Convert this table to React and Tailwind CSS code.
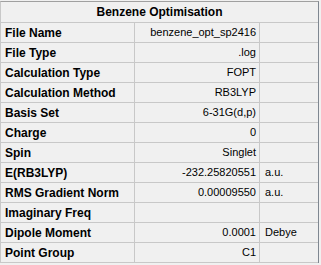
// Benzene Optimisation — tabela de resultados

const LINHAS = [
  { rotulo: 'File Name', valor: 'benzene_opt_sp2416', unidade: '' },
  { rotulo: 'File Type', valor: '.log', unidade: '' },
  { rotulo: 'Calculation Type', valor: 'FOPT', unidade: '' },
  { rotulo: 'Calculation Method', valor: 'RB3LYP', unidade: '' },
  { rotulo: 'Basis Set', valor: '6-31G(d,p)', unidade: '' },
  { rotulo: 'Charge', valor: '0', unidade: '' },
  { rotulo: 'Spin', valor: 'Singlet', unidade: '' },
  { rotulo: 'E(RB3LYP)', valor: '-232.25820551', unidade: 'a.u.' },
  { rotulo: 'RMS Gradient Norm', valor: '0.00009550', unidade: 'a.u.' },
  { rotulo: 'Imaginary Freq', valor: '', unidade: '' },
  { rotulo: 'Dipole Moment', valor: '0.0001', unidade: 'Debye' },
  { rotulo: 'Point Group', valor: 'C1', unidade: '' },
];

export default function App() {
  return (
    <div
      className="w-[321px] h-[265px] bg-[#f0f0f0] overflow-hidden pt-px text-[12px] text-black"
      style={{ fontFamily: '"Liberation Sans", Arial, sans-serif' }}
    >
      <div className="w-[319px] border-t border-l border-r border-t-[#a0a0a0] border-l-[#c8c8c8] border-r-[#7f8791]">
        {/* Título */}
        <div className="h-[21px] border-b border-[#c8c8c8] flex items-center justify-center font-bold">
          Benzene Optimisation
        </div>

        {/* Linhas de dados */}
        {LINHAS.map(({ rotulo, valor, unidade }) => (
          <div key={rotulo} className="grid grid-cols-[134px_125px_58px] h-[20px] border-b border-[#c8c8c8]">
            <div className="border-r border-[#c8c8c8] flex items-center pl-[4px] font-bold whitespace-nowrap">
              {rotulo}
            </div>
            <div className="border-r border-[#c8c8c8] flex items-center justify-end pr-[3px] text-[11px] whitespace-nowrap">
              {valor}
            </div>
            <div className="flex items-center pl-[5px] text-[11px] whitespace-nowrap">{unidade}</div>
          </div>
        ))}
      </div>
    </div>
  );
}
